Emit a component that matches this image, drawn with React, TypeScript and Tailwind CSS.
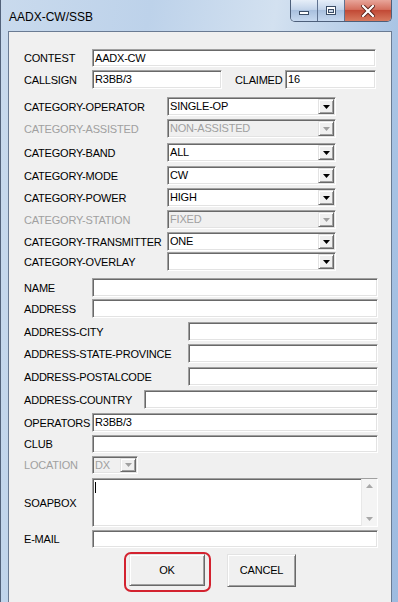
import React from "react";

const sunken =
  "border border-t-[#a0a0a0] border-l-[#a0a0a0] border-r-white border-b-white shadow-[inset_1px_1px_0_#696969,inset_-1px_-1px_0_#e3e3e3]";
const raised =
  "border border-t-[#e3e3e3] border-l-[#e3e3e3] border-r-[#696969] border-b-[#696969] shadow-[inset_1px_1px_0_#ffffff,inset_-1px_-1px_0_#a0a0a0]";

function Arrow({ off }: { off?: boolean }) {
  return (
    <svg width="7" height="4" viewBox="0 0 7 4">
      <path d="M0 0h7L3.5 4z" fill={off ? "#a0a0a0" : "#000"} />
    </svg>
  );
}

function Box({
  className,
  off,
  children,
}: {
  className: string;
  off?: boolean;
  children?: React.ReactNode;
}) {
  return (
    <div
      className={`${sunken} ${off ? "bg-[#f0f0f0] text-[#a0a0a0]" : "bg-white text-black"} flex items-center overflow-hidden ${className}`}
    >
      {children}
    </div>
  );
}

function Combo({ w, value, off }: { w: string; value: string; off?: boolean }) {
  return (
    <Box className={`${w} h-[19px]`} off={off}>
      <span className="pl-[2px] flex-1 whitespace-nowrap">{value}</span>
      <div className={`${raised} bg-[#f0f0f0] w-[16px] h-[15px] mr-[1px] flex items-center justify-center`}>
        <Arrow off={off} />
      </div>
    </Box>
  );
}

function Label({ w, off, children }: { w: string; off?: boolean; children: React.ReactNode }) {
  return (
    <span className={`${w} pl-[15px] pt-[1px] whitespace-nowrap shrink-0 ${off ? "text-[#a0a0a0]" : "text-black"}`}>
      {children}
    </span>
  );
}

function Row({ mt, children }: { mt: string; children: React.ReactNode }) {
  return <div className={`flex items-center ${mt}`}>{children}</div>;
}

export default function App() {
  const combos: [string, string, string, boolean][] = [
    ["mt-[8px]", "CATEGORY-OPERATOR", "SINGLE-OP", false],
    ["mt-[3px]", "CATEGORY-ASSISTED", "NON-ASSISTED", true],
    ["mt-[5px]", "CATEGORY-BAND", "ALL", false],
    ["mt-[4px]", "CATEGORY-MODE", "CW", false],
    ["mt-[3px]", "CATEGORY-POWER", "HIGH", false],
    ["mt-[3px]", "CATEGORY-STATION", "FIXED", true],
    ["mt-[3px]", "CATEGORY-TRANSMITTER", "ONE", false],
    ["mt-[1px]", "CATEGORY-OVERLAY", "", false],
  ];

  return (
    <div className="w-[398px] h-[602px] overflow-hidden flex flex-col bg-[linear-gradient(100deg,#c9daed_0%,#bdd2ea_30%,#d3e1f0_55%,#a9c4e4_80%,#9dbbe0_100%)] border-l border-l-[#52627a] font-['Liberation_Sans',Arial,sans-serif]">
      {/* title bar */}
      <div className="h-[31px] flex shrink-0">
        <span className="mt-[10px] ml-[8px] h-[14px] leading-[14px] text-[12px] text-black">AADX-CW/SSB</span>
        <div className="ml-auto mr-[6px] flex h-[22px] rounded-b-[5px] border border-t-0 border-[#4d5f7a] overflow-hidden">
          <div className="w-[27px] bg-[linear-gradient(#e6eef8,#c3d4ea_45%,#a9c0de_50%,#c6d8ef)] border-r border-r-[#5f7290] flex items-end justify-center pb-[6px]">
            <div className="w-[10px] h-[4px] bg-white border border-[#3b4d66]" />
          </div>
          <div className="w-[27px] bg-[linear-gradient(#e6eef8,#c3d4ea_45%,#a9c0de_50%,#c6d8ef)] border-r border-r-[#5f7290] flex items-center justify-center">
            <div className="w-[10px] h-[9px] border border-[#3b4d66] bg-white flex items-center justify-center">
              <div className="w-[6px] h-[4px] mt-[1px] bg-[#c8d6e8] border border-[#3b4d66]" />
            </div>
          </div>
          <div className="w-[46px] bg-[linear-gradient(#e8a59a,#d4705f_45%,#c24a36_50%,#d77a5f)] flex items-center justify-center">
            <svg width="14" height="12" viewBox="0 0 14 12">
              <path d="M2 1l10 10M12 1L2 11" stroke="#5a2018" strokeWidth="4" strokeLinecap="square" />
              <path d="M2 1l10 10M12 1L2 11" stroke="#fff" strokeWidth="2.2" strokeLinecap="square" />
            </svg>
          </div>
        </div>
      </div>

      {/* client area */}
      <div className="flex-1 ml-[7px] mr-[6px] bg-[#f0f0f0] border border-b-0 border-[#6a7b93] text-[11px] leading-[13px] tracking-[-0.2px]">
        <Row mt="mt-[17px]">
          <Label w="w-[83px]">CONTEST</Label>
          <Box className="w-[284px] h-[18px]">
            <span className="pl-[2px]">AADX-CW</span>
          </Box>
        </Row>
        <Row mt="mt-[3px]">
          <Label w="w-[83px]">CALLSIGN</Label>
          <Box className="w-[130px] h-[19px]">
            <span className="pl-[2px]">R3BB/3</span>
          </Box>
          <span className="ml-[12px] w-[51px] pl-[1px] pt-[1px]">CLAIMED</span>
          <Box className="w-[91px] h-[19px]">
            <span className="pl-[2px]">16</span>
          </Box>
        </Row>

        {combos.map(([mt, label, value, off]) => (
          <Row key={label} mt={mt}>
            <Label w="w-[158px]" off={off}>
              {label}
            </Label>
            <Combo w="w-[169px]" value={value} off={off} />
          </Row>
        ))}

        <Row mt="mt-[7px]">
          <Label w="w-[83px]">NAME</Label>
          <Box className="w-[286px] h-[19px]" />
        </Row>
        <Row mt="mt-[2px]">
          <Label w="w-[83px]">ADDRESS</Label>
          <Box className="w-[286px] h-[19px]" />
        </Row>
        <Row mt="mt-[4px]">
          <Label w="w-[179px]">ADDRESS-CITY</Label>
          <Box className="w-[190px] h-[19px]" />
        </Row>
        <Row mt="mt-[3px]">
          <Label w="w-[179px]">ADDRESS-STATE-PROVINCE</Label>
          <Box className="w-[190px] h-[19px]" />
        </Row>
        <Row mt="mt-[4px]">
          <Label w="w-[179px]">ADDRESS-POSTALCODE</Label>
          <Box className="w-[190px] h-[19px]" />
        </Row>
        <Row mt="mt-[4px]">
          <Label w="w-[135px]">ADDRESS-COUNTRY</Label>
          <Box className="w-[234px] h-[19px]" />
        </Row>
        <Row mt="mt-[4px]">
          <Label w="w-[83px]">OPERATORS</Label>
          <Box className="w-[286px] h-[19px]">
            <span className="pl-[2px]">R3BB/3</span>
          </Box>
        </Row>
        <Row mt="mt-[3px]">
          <Label w="w-[83px]">CLUB</Label>
          <Box className="w-[286px] h-[18px]" />
        </Row>
        <Row mt="mt-[3px]">
          <Label w="w-[83px]" off>
            LOCATION
          </Label>
          <Box className="w-[46px] h-[18px]" off>
            <span className="pl-[2px] flex-1">DX</span>
            <div className={`${raised} bg-[#f0f0f0] w-[16px] h-[14px] mr-[1px] flex items-center justify-center`}>
              <Arrow off />
            </div>
          </Box>
        </Row>
        <Row mt="mt-[4px]">
          <Label w="w-[83px]">SOAPBOX</Label>
          <Box className="w-[286px] h-[49px] !items-stretch">
            <div className="flex-1 pl-[2px] pt-[3px]">
              <div className="w-[1px] h-[11px] bg-black" />
            </div>
            <div className="w-[16px] bg-[#f4f4f4] border-l border-l-[#e8e8e8] flex flex-col items-center justify-between py-[5px]">
              <svg width="7" height="4" viewBox="0 0 7 4">
                <path d="M0 4h7L3.5 0z" fill="#a8a8a8" />
              </svg>
              <svg width="7" height="4" viewBox="0 0 7 4">
                <path d="M0 0h7L3.5 4z" fill="#a8a8a8" />
              </svg>
            </div>
          </Box>
        </Row>
        <Row mt="mt-[3px]">
          <Label w="w-[83px]">E-MAIL</Label>
          <Box className="w-[286px] h-[18px]" />
        </Row>

        <div className="flex mt-[6px] pl-[120px] gap-[22px] items-start">
          <div className="relative">
            <button className={`${raised} w-[76px] h-[32px] bg-[#f0f0f0] text-black border-r-[#404040] border-b-[#404040]`}>
              OK
            </button>
            <div className="absolute left-[-5px] right-[-6px] top-[-2px] bottom-[-6px] border-2 border-[#d3222f] rounded-[7px]" />
          </div>
          <button className={`${raised} w-[69px] h-[33px] bg-[#f0f0f0] text-black`}>CANCEL</button>
        </div>
      </div>
    </div>
  );
}
